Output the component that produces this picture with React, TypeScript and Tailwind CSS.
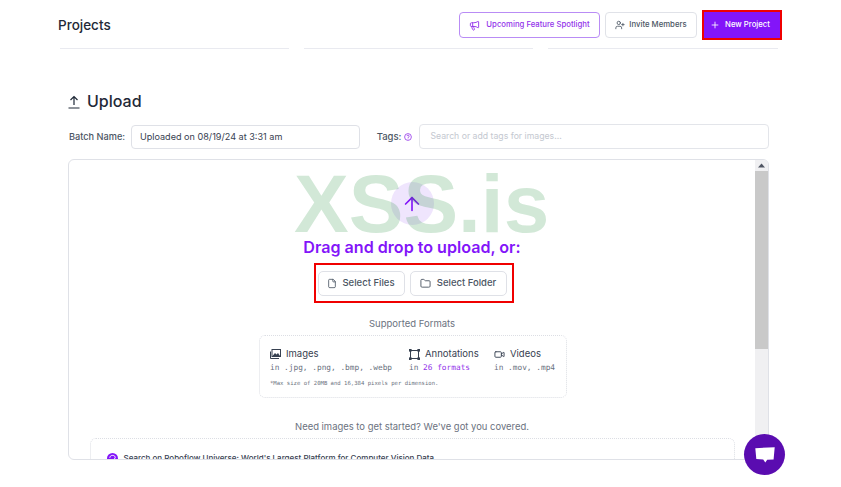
import React from 'react';
import { ArrowUp, File, Folder, Megaphone, Plus, UserPlus, Video } from 'lucide-react';

const FONT = "font-['Inter',sans-serif]";
const MONO = "font-['DejaVu_Sans_Mono','Liberation_Mono',monospace]";

const UploadIcon = () => (
  <svg width="12" height="14" viewBox="0 0 12 14" fill="none" stroke="#1f2937" strokeWidth="1.2" className="mt-[1px]">
    <path d="M6 10V1.5M2.5 5L6 1.5L9.5 5M0.5 13H11.5" />
  </svg>
);

const ImagesIcon = () => (
  <svg width="11" height="10" viewBox="0 0 11 10" fill="none" stroke="#374151" strokeWidth="1">
    <path d="M0.5 2.5V9.5H9" />
    <rect x="2" y="0.5" width="8.5" height="7" />
    <path d="M2.5 7L5 4L6.5 5.5L8 4L10 7Z" fill="#374151" stroke="none" />
  </svg>
);

const AnnotationIcon = () => (
  <svg width="11" height="11" viewBox="0 0 11 11" fill="none" stroke="#374151" strokeWidth="1">
    <path d="M1.5 1.5H9.5M1.5 9.5H9.5M1.5 1.5V9.5M9.5 1.5V9.5" />
    <rect x="0.5" y="0.5" width="1.6" height="1.6" fill="#374151" />
    <rect x="8.9" y="0.5" width="1.6" height="1.6" fill="#374151" />
    <rect x="0.5" y="8.9" width="1.6" height="1.6" fill="#374151" />
    <rect x="8.9" y="8.9" width="1.6" height="1.6" fill="#374151" />
  </svg>
);

const ChatIcon = () => (
  <svg width="20" height="16" viewBox="0 0 20 16" fill="white">
    <path d="M0.3 1.2L19.7 0.2L18.6 12.4L12.2 12.8L10.3 15.6L8.2 12.6L1.3 12Z" />
  </svg>
);

const UniverseIcon = () => (
  <svg width="11" height="11" viewBox="0 0 11 11" className="shrink-0">
    <circle cx="5.5" cy="5.5" r="5.5" fill="#8315f9" />
    <path d="M2.8 4.8C2.8 1.6 8.2 1.6 8.2 4.6C8.2 6.6 4.6 6.6 3.6 9M5.4 8.8H8.4" fill="none" stroke="white" strokeWidth="1" />
  </svg>
);

const Format = ({ icon, title, children, className }: { icon: React.ReactNode, title: string, children: React.ReactNode, className: string }) => (
  <div className={className}>
    <div className="flex items-center gap-[5px] h-[14px] text-[9.5px] text-[#374151]">
      {icon}
      {title}
    </div>
    <div className={`${MONO} text-[7.8px] leading-[12px] mt-[1px] text-[#6b7280] whitespace-nowrap`}>{children}</div>
  </div>
);

export default function App() {
  return (
    <div className={`${FONT} relative h-[487px] w-[841px] overflow-hidden bg-white`}>
      <header className="flex items-start justify-between pl-[58px] pr-[59px] pt-[12px]">
        <h1 className="text-[13.5px] leading-[26px] font-medium text-[#1f2937]">Projects</h1>
        <div className="flex items-center gap-[5px]">
          <button className="flex items-center gap-[6px] w-[141px] h-[26px] justify-center rounded-[4px] border border-[#b98cf5] text-[7.75px] font-medium text-[#9333ea]">
            <Megaphone className="w-[11px] h-[11px]" />
            Upcoming Feature Spotlight
          </button>
          <button className="flex items-center gap-[4px] w-[92px] h-[26px] justify-center rounded-[4px] border border-[#e0e2e8] text-[7.75px] font-medium text-[#4b5563]">
            <UserPlus className="w-[10px] h-[10px]" />
            Invite Members
          </button>
          <button className="flex items-center gap-[5px] w-[80px] h-[30px] -my-[2px] pr-[4px] justify-center border-2 border-[#f00000] bg-[#8315f9] text-[7.75px] font-medium text-white">
            <Plus className="w-[10px] h-[10px]" />
            New Project
          </button>
        </div>
      </header>

      <div className="flex gap-[15px] pl-[60px] mt-[10px]">
        <div className="w-[229px] h-[1px] bg-[#e9eaf0]" />
        <div className="w-[229px] h-[1px] bg-[#e9eaf0]" />
        <div className="w-[230px] h-[1px] bg-[#e9eaf0]" />
      </div>

      <main className="pl-[68px] pr-[72px] mt-[40px]">
        <div className="flex items-center gap-[7px] h-[24px]">
          <UploadIcon />
          <h2 className="text-[16px] font-medium text-[#1f2937]">Upload</h2>
        </div>

        <div className="flex items-center mt-[11px] h-[25px]">
          <label className="w-[63px] pl-[1px] pt-[1px] text-[9.2px] font-medium text-[#4b5563]">Batch Name:</label>
          <div className="flex items-center w-[229px] h-[24px] rounded-[4px] border border-[#dfe1e7] pl-[8px] text-[9.1px] text-[#374151]">Uploaded on 08/19/24 at 3:31 am</div>
          <label className="ml-[17px] pt-[1px] text-[9.5px] font-medium text-[#4b5563]">Tags:</label>
          <svg width="8" height="8" viewBox="0 0 8 8" fill="none" stroke="#9333ea" strokeWidth="0.8" className="ml-[3px] mr-[7px]">
            <circle cx="4" cy="4" r="3.4" />
            <path d="M2.9 3.1C3 1.9 5.2 1.9 5.2 3.2C5.2 4 4 4 4 5M4 5.6V6.2" />
          </svg>
          <div className="flex items-center w-[350px] h-[25px] rounded-[4px] border border-[#e3e5ea] pl-[10px] text-[8.7px] text-[#c4c8d0]">Search or add tags for images...</div>
        </div>

        <section className="flex mt-[10px] h-[301px] overflow-hidden rounded-[6px] border border-[#dfe1e7]">
          <div className="flex-1 self-start flex flex-col items-center min-w-0">
            <div className="flex items-center justify-center w-[43px] h-[43px] mt-[22px] rounded-full bg-[#efe5fd]">
              <ArrowUp className="w-[22px] h-[22px] text-[#8315f9]" strokeWidth={1.8} />
            </div>
            <p className="mt-[10px] text-[16.1px] leading-[24px] font-semibold text-[#8315f9]">Drag and drop to upload, or:</p>

            <div className="flex gap-[5px] mt-[4px] ml-[3px] w-[200px] h-[40px] items-center pl-[2px] pt-[1px] border-2 border-[#f00000]">
              <button className="flex items-center justify-center gap-[5px] w-[87px] h-[25px] rounded-[5px] border border-[#dfe1e7] text-[9.5px] font-medium text-[#4b5563]">
                <File className="w-[10px] h-[11px]" />
                Select Files
              </button>
              <button className="flex items-center justify-center gap-[6px] w-[97px] h-[25px] rounded-[5px] border border-[#dfe1e7] text-[9.5px] font-medium text-[#4b5563]">
                <Folder className="w-[11px] h-[11px]" />
                Select Folder
              </button>
            </div>

            <p className="mt-[14px] text-[9.5px] leading-[14px] text-[#6b7280]">Supported Formats</p>
            <div className="relative mt-[4px] ml-[2px] w-[308px] h-[63px] rounded-[6px] border border-dotted border-[#dcdee4]">
              <Format className="absolute left-[10px] top-[11px]" icon={<ImagesIcon />} title="Images">
                in .jpg, .png, .bmp, .webp
              </Format>
              <Format className="absolute left-[149px] top-[11px]" icon={<AnnotationIcon />} title="Annotations">
                in <span className="text-[#9333ea]">26 formats</span>
              </Format>
              <Format className="absolute left-[234px] top-[11px]" icon={<Video className="w-[11px] h-[11px]" />} title="Videos">
                in .mov, .mp4
              </Format>
              <p className={`${MONO} absolute left-[10px] top-[43px] text-[5.6px] text-[#6b7280]`}>*Max size of 20MB and 16,384 pixels per dimension.</p>
            </div>

            <p className="mt-[22px] text-[9.45px] leading-[14px] text-[#6b7280]">Need images to get started? We've got you covered.</p>
            <div className="flex gap-[6px] w-[645px] h-[60px] mt-[4px] pl-[16px] pt-[14px] rounded-[6px] border border-dotted border-[#dcdee4]">
              <UniverseIcon />
              <span className="text-[8px] leading-[11px] font-medium text-[#374151]">Search on Roboflow Universe: World's Largest Platform for Computer Vision Data</span>
            </div>
          </div>

          <div className="flex flex-col w-[13px] shrink-0 bg-[#f0f0f2]">
            <div className="flex items-center justify-center h-[11px]">
              <svg width="7" height="5" viewBox="0 0 7 5" fill="#505663"><path d="M3.5 0.5L7 4.5H0Z" /></svg>
            </div>
            <div className="h-[178px] bg-[#c9c9c9]" />
          </div>
        </section>
      </main>

      {/* watermark on top of the page */}
      <div className="absolute left-[294px] top-[160px] font-['Liberation_Sans',sans-serif] font-bold text-[82px] leading-[88px] text-[#1d8a35]/20 pointer-events-none">XSS.is</div>

      <button className="absolute left-[744px] top-[434px] flex items-center justify-center w-[41px] h-[41px] rounded-full bg-[#5a0cb0]">
        <ChatIcon />
      </button>
    </div>
  );
}
